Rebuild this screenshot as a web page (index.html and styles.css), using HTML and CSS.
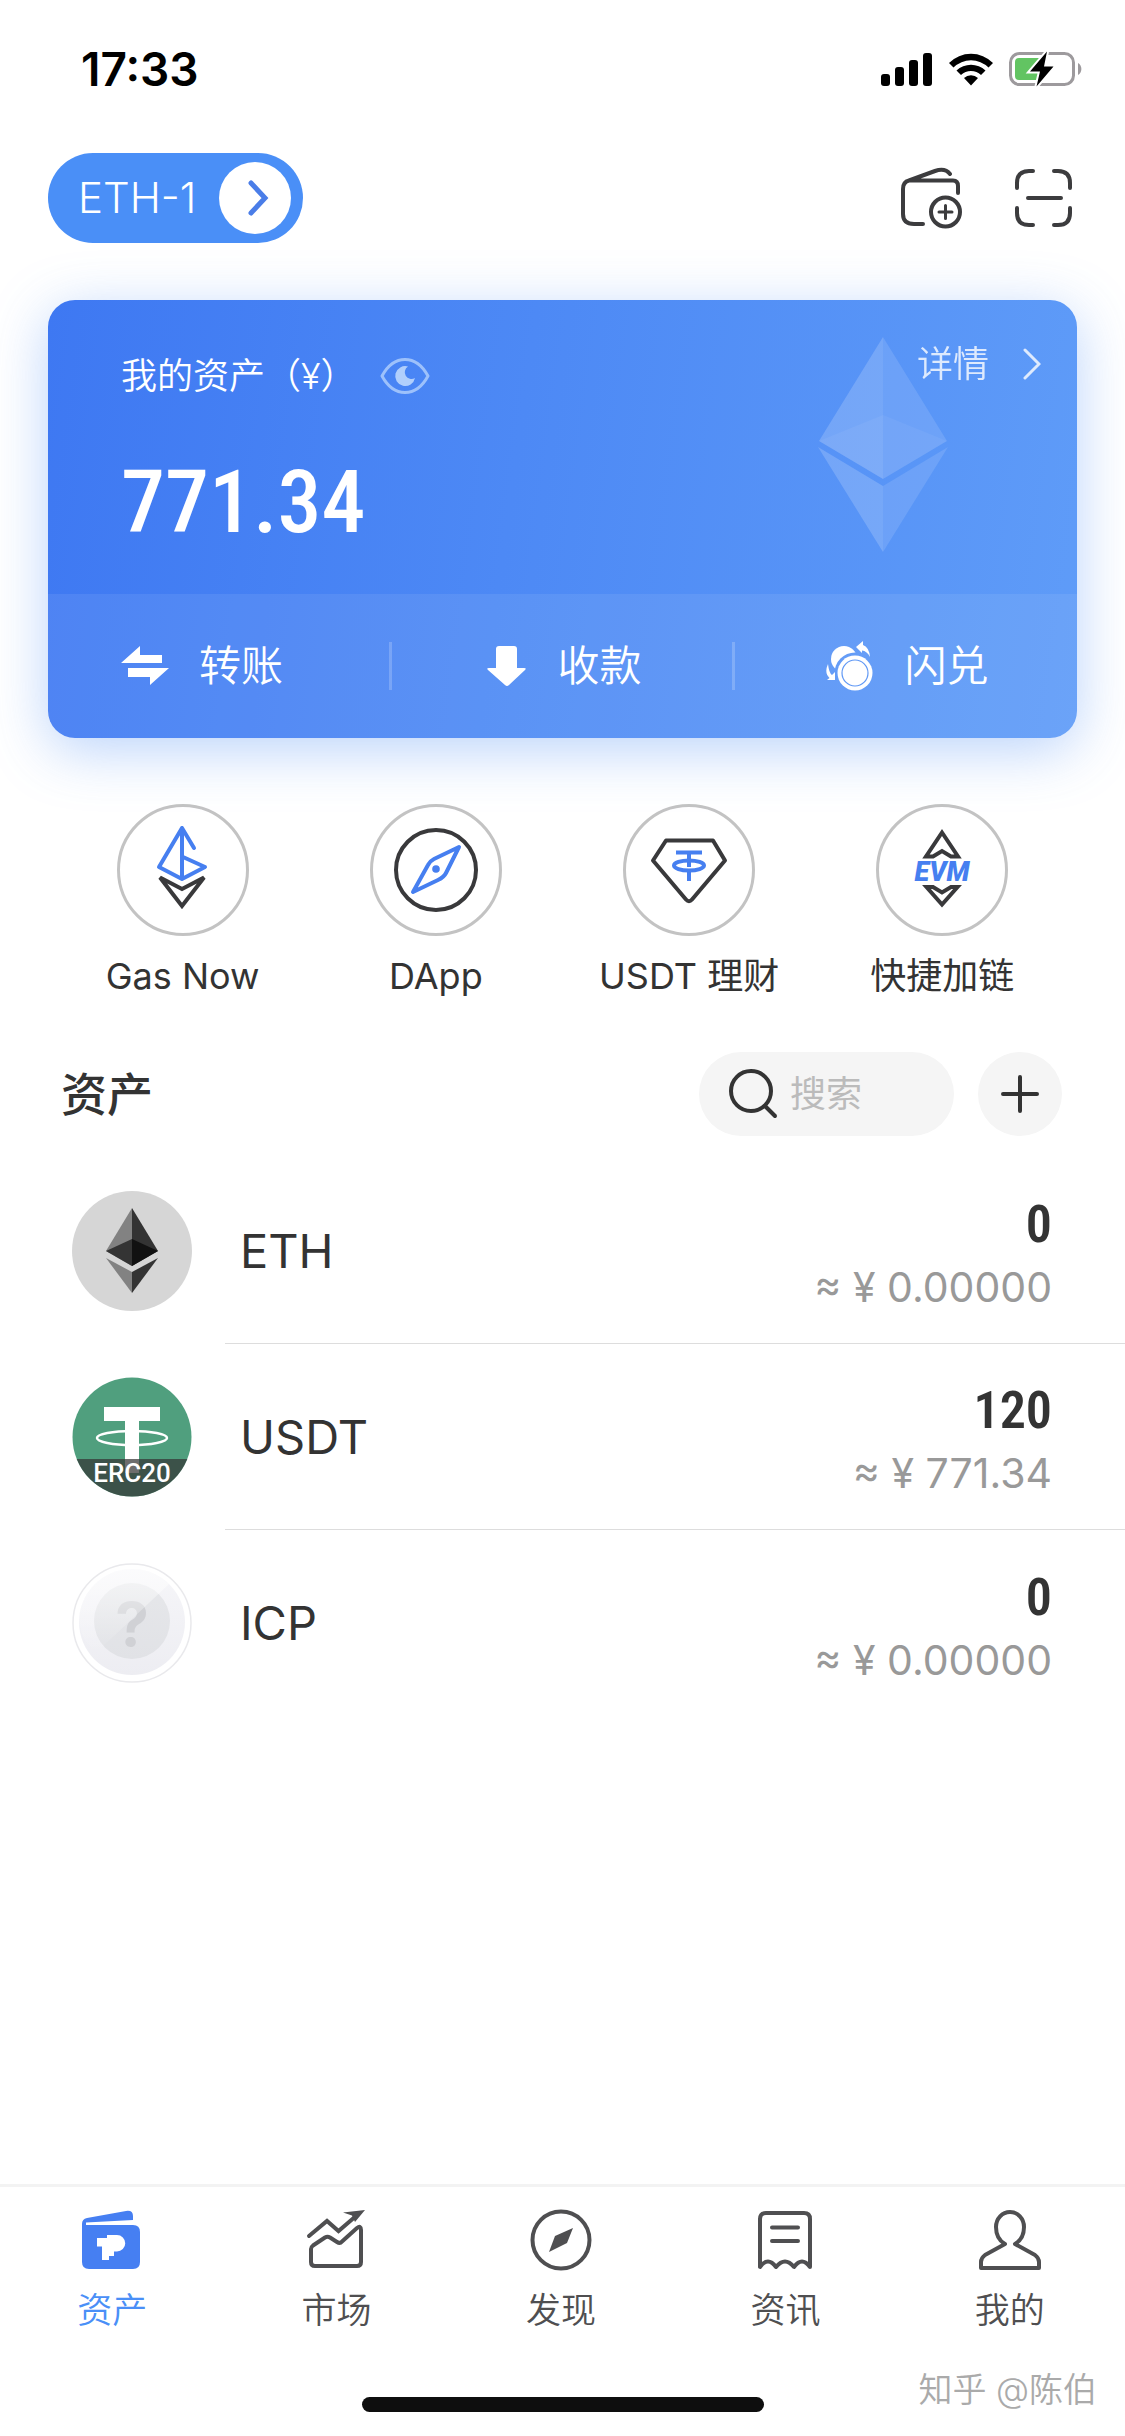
FILE: index.html
```html
<!DOCTYPE html>
<html lang="zh-CN">
<head>
<meta charset="utf-8">
<meta name="viewport" content="width=device-width">
<title>资产</title>
<link rel="stylesheet" href="styles.css">
</head>
<body>
<div class="status">
  <time class="status-time">17:33</time>
  <div class="status-icons">
    <svg width="52" height="34" viewBox="0 0 52 34"><rect x="0" y="22" width="9" height="12" rx="3"/><rect x="14" y="15" width="9" height="19" rx="3"/><rect x="28" y="8" width="9" height="26" rx="3"/><rect x="42" y="1" width="9" height="33" rx="3"/></svg>
    <svg width="46" height="34" viewBox="0 0 46 34"><path d="M1 11A31 31 0 0 1 45 11L40.500 15.500A25 25 0 0 0 5.500 15.500ZM8.500 18.500A21 21 0 0 1 37.500 18.500L33 23A14.500 14.500 0 0 0 13 23ZM16 26A10.500 10.500 0 0 1 30 26L23 33.500Z"/></svg>
    <svg width="74" height="38" viewBox="0 0 74 38"><rect x="1.500" y="3.500" width="63" height="31" rx="9" fill="none" stroke="#9d9a9d" stroke-width="3"/><path d="M69 13a7 7 0 0 1 0 12z" fill="#9d9a9d"/><path d="M10 8H32V30H10a4 4 0 0 1-4-4V12a4 4 0 0 1 4-4z" fill="#62c462"/><path d="M38 1.500L21 21.500H31L27.500 36.500L44.500 16.500H35Z" stroke="#fff" stroke-width="4" paint-order="stroke"/></svg>
  </div>
</div>

<header class="topbar">
  <button class="wallet-pill" type="button">
    <span>ETH-1</span>
    <svg width="72" height="72" viewBox="0 0 72 72"><circle cx="36" cy="36" r="36" fill="#fff"/><path d="M32 21L46 36L32 51" fill="none" stroke="#4a7de8" stroke-width="5" stroke-linecap="round"/></svg>
  </button>
  <div class="top-actions">
    <button class="icon-btn" type="button" aria-label="添加钱包">
      <svg class="line" width="62" height="62" viewBox="0 0 62 62"><path d="M22 57H13Q2 57 2 47V22Q2 15 8 13.500H52Q57 13.500 57 19V26M8 13.500L34 4Q44 .500 49 7"/><circle cx="44.500" cy="45" r="14.500"/><path d="M38 45H51M44.500 38.500V51.500" stroke-width="3"/></svg>
    </button>
    <button class="icon-btn" type="button" aria-label="扫一扫">
      <svg class="line" width="58" height="60" viewBox="0 0 58 60"><path d="M18 3H14Q2 3 2 15V20M39 3H43Q55 3 55 15V20M18 57H14Q2 57 2 45V40M39 57H43Q55 57 55 45V40M13 30H46"/></svg>
    </button>
  </div>
</header>

<main>
  <section class="card">
    <svg class="card-eth" width="130" height="216" viewBox="0 0 130 216" fill="#fff"><path d="M65 0L1 104L65 142Z" opacity=".18"/><path d="M65 0L129 104L65 142Z" opacity=".12"/><path d="M65 78L1 104L65 142L129 104Z" opacity=".05"/><path d="M0 110L65 149V215Z" opacity=".18"/><path d="M130 110L65 149V215Z" opacity=".12"/></svg>
    <div class="card-main">
      <div class="card-head">
        <span>我的资产（¥）</span>
        <button class="icon-btn" type="button" aria-label="隐藏金额">
          <svg width="50" height="38" viewBox="0 0 50 38"><path d="M2 19C14-3 36-3 48 19C36 41 14 41 2 19Z" fill="none" stroke="#9dc1fb" stroke-width="3" stroke-linejoin="round"/><path d="M28 9.500A10 10 0 1 0 35 21A6 6 0 1 1 28 9.500Z" fill="#b1cffc"/></svg>
        </button>
        <a class="card-detail" href="#detail">详情
          <svg width="18" height="32" viewBox="0 0 18 32"><path d="M2 2L16 16L2 30" fill="none" stroke="currentColor" stroke-width="3" stroke-linecap="round"/></svg>
        </a>
      </div>
      <div class="balance">771.34</div>
    </div>
    <div class="card-actions">
      <button type="button"><svg width="48" height="40" viewBox="0 0 48 40" fill="#fff"><path d="M0 17L19 0V9H41V17ZM7 22H48L29 39V31H7Z"/></svg>转账</button>
      <button type="button"><svg width="40" height="42" viewBox="0 0 40 42" fill="#fff"><path d="M12 1H27Q30 1 30 4V23H37Q40 23 38 25L22 40Q20 42 18 40L1 25Q-1 23 2 23H9V4Q9 1 12 1Z"/></svg>收款</button>
      <button type="button"><svg width="48" height="50" viewBox="0 0 48 50"><defs><mask id="coin-gap"><rect width="48" height="50" fill="#fff"/><circle cx="29" cy="32" r="20.500" fill="#000"/></mask></defs><circle cx="18" cy="18" r="13" fill="#fff" mask="url(#coin-gap)"/><circle cx="29" cy="32" r="17.500" fill="#fff"/><circle cx="29" cy="32" r="13" fill="none" stroke="#6199f5" stroke-width="1.200"/><path d="M30 6L37 0V4Q43 6 44 16Q41 10 36 9.500V12ZM2 23Q3 32 6 34L9 31V39L1 39L3.500 37Q-2 32 2 23Z" fill="#fff"/></svg>闪兑</button>
    </div>
  </section>

  <nav class="quick">
    <a href="#gas"><svg width="132" height="132" viewBox="0 0 132 132"><circle class="ring" cx="66" cy="66" r="64.500"/><path class="blue" d="M77 44L65 24L42 63L65 75L88 63L66 53M65 24V75"/><path class="dark" d="M43 73.500L65 85L87 73.500L65 102Z" stroke-linejoin="miter"/></svg>Gas Now</a>
    <a href="#dapp"><svg width="132" height="132" viewBox="0 0 132 132"><circle class="ring" cx="66" cy="66" r="64.500"/><circle class="dark" cx="66" cy="66" r="40"/><path class="blue" d="M89 43L64 55Q60 57 58 61L43 88L68 76Q74 73 76 69Z"/><circle cx="66" cy="65" r="3.800" fill="#467ff0"/></svg>DApp</a>
    <a href="#earn"><svg width="132" height="132" viewBox="0 0 132 132"><circle class="ring" cx="66" cy="66" r="64.500"/><path class="dark" d="M43 36.500H90L102 56.500L69 95.500Q66 99 63 95.500L30 56.500Z"/><path class="blue" d="M55 48.500H77M66 49V61M66 67V75" stroke-linecap="square"/><ellipse class="blue" cx="66" cy="61.500" rx="15" ry="5"/></svg>USDT 理财</a>
    <a href="#chain"><svg width="132" height="132" viewBox="0 0 132 132"><circle class="ring" cx="66" cy="66" r="64.500"/><path class="dark" d="M66 28.500L82 52.500H75L66 47L57 52.500H50ZM50.500 83H57L66 88.500L75 83H81.500L66 100.500Z" stroke-linejoin="miter"/><text class="evm" x="66" y="77" text-anchor="middle">EVM</text></svg>快捷加链</a>
  </nav>

  <section>
    <div class="assets-head">
      <h2>资产</h2>
      <label class="search">
        <svg class="line" width="50" height="50" viewBox="0 0 50 50"><circle cx="22" cy="22" r="20"/><path d="M36 37L46 47"/></svg>
        <input type="search" placeholder="搜索" aria-label="搜索">
      </label>
      <button class="add" type="button" aria-label="添加资产"><svg class="line" width="38" height="38" viewBox="0 0 38 38"><path d="M19 2V36M2 19H36"/></svg></button>
    </div>
    <ul class="tokens">
      <li>
        <svg width="120" height="120" viewBox="0 0 120 120"><circle cx="60" cy="60" r="60" fill="#d6d6d6"/><path d="M60 17L34 60L60 75Z" fill="#828282"/><path d="M60 17L86 60L60 75Z" fill="#333"/><path d="M60 48L34 60L60 75Z" fill="#343434"/><path d="M60 48L86 60L60 75Z" fill="#111"/><path d="M34 67L60 81V102Z" fill="#828282"/><path d="M86 67L60 81V102Z" fill="#343434"/></svg>
        <div class="token-row"><span class="token-name">ETH</span><span class="token-value"><b>0</b><span>≈ ¥ 0.00000</span></span></div>
      </li>
      <li>
        <svg width="120" height="120" viewBox="0 0 120 120"><defs><clipPath id="disc"><circle cx="60" cy="60" r="59.500"/></clipPath></defs><g clip-path="url(#disc)"><rect width="120" height="120" fill="#509f7e"/><path d="M32 30H88V44H67V96H53V44H32Z" fill="#fff"/><ellipse cx="60" cy="61" rx="35" ry="7" fill="none" stroke="#fff" stroke-width="2.500"/><rect y="82" width="120" height="38" fill="#353535" fill-opacity=".72"/></g><text class="chain" x="60" y="105" text-anchor="middle">ERC20</text></svg>
        <div class="token-row"><span class="token-name">USDT</span><span class="token-value"><b>120</b><span>≈ ¥ 771.34</span></span></div>
      </li>
      <li>
        <svg width="120" height="120" viewBox="0 0 120 120"><defs><linearGradient id="coin" x1="0" y1="0" x2="0" y2="1"><stop offset="0" stop-color="#f6f6f9"/><stop offset="1" stop-color="#ededf2"/></linearGradient><linearGradient id="core" x1="0" y1="0" x2="0" y2="1"><stop offset="0" stop-color="#e6e7ea"/><stop offset="1" stop-color="#e1e2e6"/></linearGradient><linearGradient id="shine" x1="0" y1="0" x2="0" y2="1"><stop offset="0" stop-color="#fff" stop-opacity=".6"/><stop offset="1" stop-color="#fff" stop-opacity="0"/></linearGradient></defs><circle cx="60" cy="60" r="59" fill="#fff" stroke="#e9e9ec" stroke-width="1.500"/><circle cx="60" cy="59" r="53" fill="url(#coin)"/><circle cx="60" cy="58" r="38" fill="url(#core)"/><text class="unknown" x="60" y="83" text-anchor="middle">?</text><path d="M97 21A53 53 0 0 0 7 55Q8 78 25 89Z" fill="url(#shine)"/></svg>
        <div class="token-row"><span class="token-name">ICP</span><span class="token-value"><b>0</b><span>≈ ¥ 0.00000</span></span></div>
      </li>
    </ul>
  </section>
</main>

<footer class="bottom">
  <nav class="tabs">
    <a class="active" href="#assets"><svg width="66" height="66" viewBox="0 0 66 66"><path d="M3 16Q3 11 8 10L47 3Q54 2 54 8V12L7 14.500V17H54Q61 17 61 24V54Q61 61 54 61H10Q3 61 3 54Z" fill="#467ff2"/><path d="M18 30H28V27H38A8 8 0 0 1 38 43.500H35V48H30V52H23V38.500H18Z" fill="#fff"/></svg>资产</a>
    <a href="#market"><svg class="line" width="66" height="66" viewBox="0 0 66 66"><path d="M5 28L23 13L34.500 23L52 8" stroke-linejoin="miter"/><path d="M61 2L39 4.500L48 7.500L51 14Z" fill="currentColor" stroke="none"/><path d="M7 41Q7 39 9 37.500L21 29.500Q23.500 28 26 29.500L33 34Q36 36 38 33.500L53 20Q57 17 57 22V54Q57 58 53 58H11Q7 58 7 54Z"/></svg>市场</a>
    <a href="#discover"><svg class="line" width="66" height="66" viewBox="0 0 66 66"><circle cx="33" cy="32" r="28.500"/><path d="M45 20L39 35L21 44L27 28Z" fill="currentColor" stroke="none"/></svg>发现</a>
    <a href="#news"><svg class="line" width="66" height="66" viewBox="0 0 66 66"><path d="M8 59V11Q8 5 14 5H52Q58 5 58 11V59Q50 48 42 59Q33 48 24 59Q16 48 8 59ZM20 19.500H46M20 33H46"/></svg>资讯</a>
    <a href="#me"><svg class="line" width="66" height="66" viewBox="0 0 66 66"><path d="M28 36Q19 31 19 19A14 15 0 0 1 47 19Q47 31 38 36L58 47Q62 50 62 54V60H4V54Q4 50 8 47Z"/></svg>我的</a>
  </nav>
  <div class="home-bar"></div>
  <div class="watermark">知乎 @陈伯</div>
</footer>
</body>
</html>
```
FILE: styles.css
```css
* { box-sizing: border-box; }
body {
  margin: 0;
  min-height: 100vh;
  display: flex;
  flex-direction: column;
  background: #fff;
  color: #333;
  font-family: Inter, "Noto Sans CJK SC", sans-serif;
  font-size: 36px;
  line-height: 48px;
}
svg { display: block; flex: none; }
button { font: inherit; color: inherit; border: 0; background: none; padding: 0; cursor: pointer; }
a { color: inherit; text-decoration: none; }
.line { fill: none; stroke: currentColor; stroke-width: 4px; stroke-linecap: round; stroke-linejoin: round; }

.status {
  display: flex;
  justify-content: space-between;
  align-items: center;
  height: 138px;
  padding: 0 42px 0 81px;
  color: #000;
}
.status-time { font-size: 46px; font-weight: 600; }
.status-icons { display: flex; align-items: center; gap: 15px; }

.topbar {
  display: flex;
  justify-content: space-between;
  align-items: center;
  padding: 15px 52px 0 48px;
}
.wallet-pill {
  display: flex;
  align-items: center;
  justify-content: space-between;
  width: 255px;
  height: 90px;
  padding: 0 12px 0 30px;
  border-radius: 45px;
  background: #4a8ff7;
  color: #fff;
  font-size: 42px;
  font-weight: 350;
}
.top-actions { display: flex; align-items: center; gap: 52px; color: #3c3c3e; }

.card {
  position: relative;
  margin: 57px 48px 0;
  border-radius: 27px;
  overflow: hidden;
  color: #fff;
  background: linear-gradient(98deg, #3e78f2, #4d89f5 45%, #5f9cf8);
  box-shadow: 0 12px 56px rgba(74, 140, 245, .38);
}
.card-eth { position: absolute; right: 129px; top: 37px; }
.card-main { position: relative; height: 294px; padding: 40px 36px 0 73px; }
.card-head { display: flex; align-items: center; gap: 24px; font-weight: 350; }
.card-detail {
  display: flex;
  align-items: center;
  gap: 34px;
  margin-left: auto;
  padding-bottom: 24px;
  opacity: .8;
}
.balance {
  margin-top: 38px;
  font-family: "Roboto Condensed", Roboto, sans-serif;
  font-size: 88px;
  line-height: 104px;
  font-weight: 500;
}
.card-actions {
  display: grid;
  grid-template-columns: repeat(3, 1fr);
  height: 144px;
  background: rgba(255, 255, 255, .08);
  font-size: 42px;
  font-weight: 350;
}
.card-actions button { display: flex; align-items: center; justify-content: center; gap: 30px; position: relative; padding-left: 4px; }
.card-actions button:first-child { justify-content: flex-start; padding-left: 73px; }
.card-actions button + button::before {
  content: "";
  position: absolute;
  left: -2px;
  width: 3px;
  height: 48px;
  background: rgba(255, 255, 255, .2);
}

.quick {
  display: grid;
  grid-template-columns: repeat(4, 1fr);
  margin-top: 66px;
  padding: 0 56px;
}
.quick a { display: flex; flex-direction: column; align-items: center; gap: 16px; }
.quick svg { fill: none; stroke-width: 4px; stroke-linejoin: round; stroke-linecap: round; }
.quick .ring { stroke: #c3c3c3; stroke-width: 3px; }
.quick .blue { stroke: #467ff0; }
.quick .dark { stroke: #39393b; }
.evm { fill: #467ff0; font: italic 900 27px Roboto, sans-serif; }

.assets-head { display: flex; align-items: center; gap: 24px; padding: 0 63px 0 61px; margin-top: 52px; }
h2 { margin: 0 auto 0 0; font-size: 46px; line-height: 60px; font-weight: 500; }
.search {
  display: flex;
  align-items: center;
  gap: 11px;
  width: 255px;
  height: 84px;
  padding: 0 30px;
  border-radius: 42px;
  background: #f5f5f5;
}
.search input {
  flex: 1;
  min-width: 0;
  padding: 0;
  border: 0;
  outline: 0;
  background: none;
  font: inherit;
  color: #333;
  appearance: none;
}
.search input::placeholder { color: #bbb; }
.add {
  display: flex;
  align-items: center;
  justify-content: center;
  width: 84px;
  height: 84px;
  border-radius: 50%;
  background: #f5f5f5;
}

.tokens { list-style: none; margin: 22px 0 0; padding: 0; }
.tokens li { display: flex; align-items: center; gap: 33px; padding-left: 72px; }
.token-row {
  flex: 1;
  display: flex;
  align-items: center;
  justify-content: space-between;
  height: 186px;
  padding: 0 73px 0 15px;
  border-bottom: 1px solid #ddd;
}
.tokens li:last-child .token-row { border-bottom: 0; }
.token-name { font-size: 47px; }
.token-value { display: flex; flex-direction: column; align-items: flex-end; padding-top: 11px; font-size: 41px; line-height: 62px; color: #999; }
.token-value b { font-family: "Roboto Condensed", Roboto, sans-serif; font-size: 52px; font-weight: 600; color: #333; }
.chain { fill: #fff; font: 500 26px Roboto, sans-serif; }
.unknown { fill: #d0d1d5; font: 700 60px Inter, sans-serif; }

.bottom { position: relative; margin-top: auto; padding-bottom: 24px; border-top: 3px solid #f3f3f3; }
.tabs { display: grid; grid-template-columns: repeat(5, 1fr); padding: 21px 3px 0 0; color: #4f4f51; font-size: 35px; font-weight: 350; }
.tabs a { display: flex; flex-direction: column; align-items: center; gap: 12px; }
.tabs .active { color: #4a8ff7; }
.home-bar { width: 402px; height: 15px; margin: 63px auto 0; border-radius: 8px; background: #0e0e0e; }
.watermark {
  position: absolute;
  right: 28px;
  bottom: 22px;
  color: #aaa;
  font-size: 34px;
  font-weight: 350;
  text-shadow: -1px -1px 0 #fff;
}
```
